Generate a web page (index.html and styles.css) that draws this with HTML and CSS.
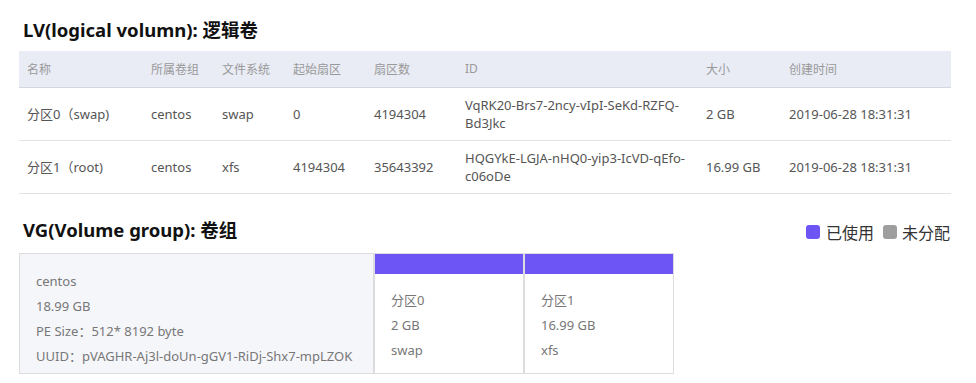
FILE: index.html
```html
<!DOCTYPE html>
<html lang="zh">
<head>
<meta charset="utf-8">
<link rel="stylesheet" href="styles.css">
</head>
<body>
<div class="page">
  <h2 class="title">LV(logical volumn): 逻辑卷</h2>
  <table class="lv">
    <colgroup>
      <col style="width:124px"><col style="width:71px"><col style="width:71px"><col style="width:81px"><col style="width:91px"><col style="width:241px"><col style="width:83px"><col>
    </colgroup>
    <thead>
      <tr><th>名称</th><th>所属卷组</th><th>文件系统</th><th>起始扇区</th><th>扇区数</th><th>ID</th><th>大小</th><th>创建时间</th></tr>
    </thead>
    <tbody>
      <tr><td>分区0（swap)</td><td>centos</td><td>swap</td><td>0</td><td>4194304</td><td class="id">VqRK20-Brs7-2ncy-vIpI-SeKd-RZFQ-Bd3Jkc</td><td>2 GB</td><td>2019-06-28 18:31:31</td></tr>
      <tr><td>分区1（root)</td><td>centos</td><td>xfs</td><td>4194304</td><td>35643392</td><td class="id">HQGYkE-LGJA-nHQ0-yip3-IcVD-qEfo-c06oDe</td><td>16.99 GB</td><td>2019-06-28 18:31:31</td></tr>
    </tbody>
  </table>

  <div class="vg-head">
    <h2 class="title">VG(Volume group): 卷组</h2>
    <div class="legend">
      <span class="dot used"></span><span class="lbl">已使用</span>
      <span class="dot free"></span><span class="lbl">未分配</span>
    </div>
  </div>

  <div class="vg">
    <div class="vg-info">
      <div>centos</div>
      <div>18.99 GB</div>
      <div>PE Size：512* 8192 byte</div>
      <div>UUID：pVAGHR-Aj3l-doUn-gGV1-RiDj-Shx7-mpLZOK</div>
    </div>
    <div class="part">
      <div class="bar"></div>
      <div class="part-body">
        <div>分区0</div>
        <div>2 GB</div>
        <div>swap</div>
      </div>
    </div>
    <div class="part">
      <div class="bar"></div>
      <div class="part-body">
        <div>分区1</div>
        <div>16.99 GB</div>
        <div>xfs</div>
      </div>
    </div>
  </div>
</div>
</body>
</html>
```

FILE: styles.css
```css
* { box-sizing: border-box; }
html, body { margin: 0; padding: 0; background: #fff; }
body {
  font-family: "Noto Sans", "Noto Sans CJK SC", sans-serif;
  font-size: 13px;
  color: #555;
}
.page { padding: 16px 25px 0 19px; }
.title {
  margin: 0 0 0 4px;
  font-size: 18.5px;
  line-height: 28px;
  font-weight: 700;
  color: #111;
}
.lv {
  margin-top: 7px;
  width: 932px;
  border-collapse: collapse;
  table-layout: fixed;
}
.lv th {
  background: #e9ecf5;
  color: #999;
  font-weight: 400;
  font-size: 12px;
  text-align: left;
  height: 36px;
  padding: 0 8px;
  border-bottom: 1px solid #d3d7de;
}
.lv td {
  height: 53px;
  padding: 0 8px;
  line-height: 18px;
  border-bottom: 1px solid #e2e2e2;
  color: #555;
}
.lv td.id { overflow-wrap: break-word; }

.vg-head {
  margin-top: 22px;
  display: flex;
  align-items: center;
  justify-content: space-between;
}
.legend {
  display: flex;
  align-items: center;
  font-size: 16px;
  color: #333;
  margin-top: 4px;
  margin-right: 1px;
}
.dot {
  width: 14px;
  height: 14px;
  border-radius: 3px;
  display: inline-block;
  margin-right: 6px;
}
.dot.used { background: #6c54f5; }
.dot.free { background: #9e9e9e; margin-left: 9px; margin-right: 5px; }

.vg {
  margin-top: 9px;
  display: flex;
  height: 121px;
}
.vg-info {
  width: 355px;
  background: #f5f6fa;
  border: 1px solid #dcdcdf;
  padding: 15px 0 0 16px;
  color: #777;
  line-height: 25px;
}
.part {
  width: 150px;
  border: 1px solid #dcdcdf;
  background: #fff;
  color: #777;
}
.bar {
  height: 20px;
  background: #6c54f5;
}
.part-body {
  padding: 14px 0 0 16px;
  line-height: 25px;
}
```
